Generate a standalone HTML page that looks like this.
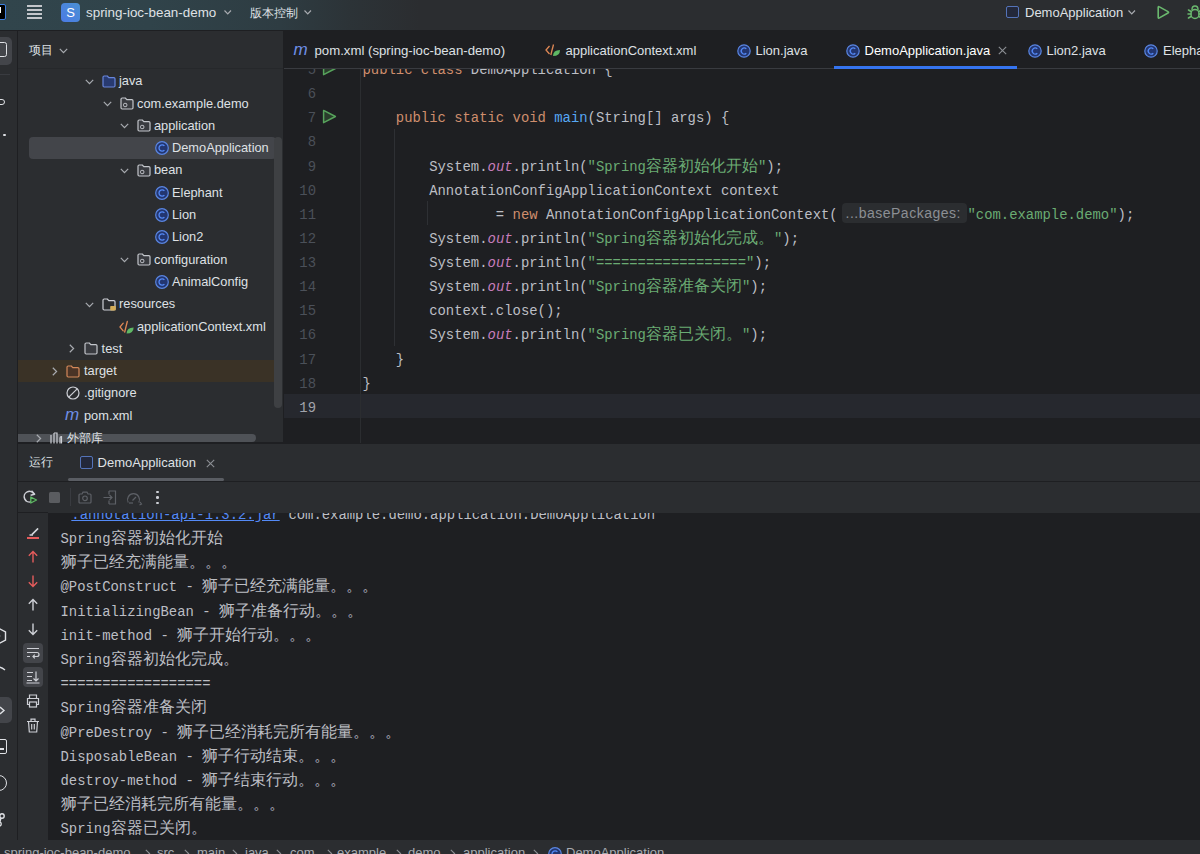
<!DOCTYPE html><html><head><meta charset="utf-8"><style>*{box-sizing:border-box;margin:0;padding:0}
html,body{width:1200px;height:854px;overflow:hidden;background:#1e1f22}
body{position:relative;font-family:"Liberation Sans",sans-serif;font-size:13px;color:#dfe1e5}
.a{position:absolute}
.t{position:absolute;white-space:pre;line-height:16px}
svg{position:absolute;overflow:visible}
#hdr{left:0;top:0;width:1200px;height:30px;background:linear-gradient(90deg,#31454c 0px,#30434a 150px,#2e3c42 280px,#2c3337 350px,#2b2d30 420px)}
.cl{position:absolute;white-space:pre;font-family:"Liberation Mono",monospace;font-size:13.9px;line-height:24px;color:#bcbec4}
.k{color:#cf8e6d}.s{color:#6aab73}.o{color:#c77dbb;font-style:italic}.m{color:#56a8f5}
.cj{font-size:16px}
.ln{position:absolute;width:40px;left:276px;text-align:right;font-family:"Liberation Mono",monospace;font-size:13.9px;line-height:24px;color:#4b5059}
.tr{position:absolute;white-space:pre;font-size:13px;line-height:16px;color:#dfe1e5}
</style></head><body>
<div id="hdr" class="a"></div>
<div class="a" style="left:0;top:30px;width:1200px;height:1px;background:#1e1f22"></div>
<div class="a" style="left:0;top:31px;width:17px;height:809px;background:#2b2d30"></div>
<div class="a" style="left:17px;top:31px;width:1px;height:809px;background:#1e1f22"></div>
<div class="a" style="left:18px;top:31px;width:265px;height:411px;background:#2b2d30"></div>
<div class="a" style="left:18px;top:68px;width:265px;height:1px;background:#26282b"></div>
<div class="a" style="left:283px;top:31px;width:1px;height:412px;background:#1e1f22"></div>
<div class="a" style="left:284px;top:31px;width:916px;height:412px;background:#1e1f22"></div>
<div class="a" style="left:18px;top:442px;width:1182px;height:2px;background:#1e1f22"></div>
<div class="a" style="left:18px;top:444px;width:1182px;height:69px;background:#2b2d30"></div>
<div class="a" style="left:18px;top:513px;width:30px;height:327px;background:#2b2d30"></div>
<div class="a" style="left:48px;top:513px;width:1152px;height:327px;background:#1e1f22"></div>
<div class="a" style="left:0;top:840px;width:1200px;height:14px;background:#2b2d30"></div>

<div class="a" style="left:18px;top:360px;width:264px;height:22px;background:#3a3226"></div>
<div class="a" style="left:29px;top:137px;width:247px;height:21.5px;border-radius:4px;background:#43454a"></div>
<svg style="left:85px;top:78.70px" width="9" height="6"><path d="M0.8 0.8 L4.5 4.6 L8.2 0.8" fill="none" stroke="#a8abb0" stroke-width="1.2"/></svg>
<svg style="left:102px;top:74.70px" width="14" height="13"><path d="M1 2.2 Q1 1 2.2 1 H5.3 L6.8 2.6 H11.8 Q13 2.6 13 3.8 V10.8 Q13 12 11.8 12 H2.2 Q1 12 1 10.8 Z" fill="#283a70" stroke="#6886dc" stroke-width="1.2" stroke-linejoin="round"/></svg>
<div class="t" style="left:119px;top:73.20px;font-size:12.8px;color:#dfe1e5">java</div>
<svg style="left:102.5px;top:101.00px" width="9" height="6"><path d="M0.8 0.8 L4.5 4.6 L8.2 0.8" fill="none" stroke="#a8abb0" stroke-width="1.2"/></svg>
<svg style="left:120px;top:97.00px" width="14" height="13"><path d="M1 2.2 Q1 1 2.2 1 H5.3 L6.8 2.6 H11.8 Q13 2.6 13 3.8 V10.8 Q13 12 11.8 12 H2.2 Q1 12 1 10.8 Z" fill="#393b40" stroke="#c3c6cb" stroke-width="1.2" stroke-linejoin="round"/><rect x="3.6" y="6.4" width="3.2" height="3.2" rx="1" fill="none" stroke="#ced0d6" stroke-width="1"/></svg>
<div class="t" style="left:137px;top:95.50px;font-size:12.8px;color:#dfe1e5">com.example.demo</div>
<svg style="left:120px;top:123.30px" width="9" height="6"><path d="M0.8 0.8 L4.5 4.6 L8.2 0.8" fill="none" stroke="#a8abb0" stroke-width="1.2"/></svg>
<svg style="left:137px;top:119.30px" width="14" height="13"><path d="M1 2.2 Q1 1 2.2 1 H5.3 L6.8 2.6 H11.8 Q13 2.6 13 3.8 V10.8 Q13 12 11.8 12 H2.2 Q1 12 1 10.8 Z" fill="#393b40" stroke="#c3c6cb" stroke-width="1.2" stroke-linejoin="round"/><rect x="3.6" y="6.4" width="3.2" height="3.2" rx="1" fill="none" stroke="#ced0d6" stroke-width="1"/></svg>
<div class="t" style="left:154px;top:117.80px;font-size:12.8px;color:#dfe1e5">application</div>
<svg style="left:155px;top:141.10px" width="14" height="14"><circle cx="7" cy="7" r="6.3" fill="#233670" stroke="#5a86e2" stroke-width="1.2"/><path d="M9.4 4.9 A3.1 3.1 0 1 0 9.4 9.1" fill="none" stroke="#548af7" stroke-width="1.3"/></svg>
<div class="t" style="left:172px;top:140.10px;font-size:12.8px;color:#dfe1e5">DemoApplication</div>
<svg style="left:120px;top:167.90px" width="9" height="6"><path d="M0.8 0.8 L4.5 4.6 L8.2 0.8" fill="none" stroke="#a8abb0" stroke-width="1.2"/></svg>
<svg style="left:137px;top:163.90px" width="14" height="13"><path d="M1 2.2 Q1 1 2.2 1 H5.3 L6.8 2.6 H11.8 Q13 2.6 13 3.8 V10.8 Q13 12 11.8 12 H2.2 Q1 12 1 10.8 Z" fill="#393b40" stroke="#c3c6cb" stroke-width="1.2" stroke-linejoin="round"/><rect x="3.6" y="6.4" width="3.2" height="3.2" rx="1" fill="none" stroke="#ced0d6" stroke-width="1"/></svg>
<div class="t" style="left:154px;top:162.40px;font-size:12.8px;color:#dfe1e5">bean</div>
<svg style="left:155px;top:185.70px" width="14" height="14"><circle cx="7" cy="7" r="6.3" fill="#233670" stroke="#5a86e2" stroke-width="1.2"/><path d="M9.4 4.9 A3.1 3.1 0 1 0 9.4 9.1" fill="none" stroke="#548af7" stroke-width="1.3"/></svg>
<div class="t" style="left:172px;top:184.70px;font-size:12.8px;color:#dfe1e5">Elephant</div>
<svg style="left:155px;top:208.00px" width="14" height="14"><circle cx="7" cy="7" r="6.3" fill="#233670" stroke="#5a86e2" stroke-width="1.2"/><path d="M9.4 4.9 A3.1 3.1 0 1 0 9.4 9.1" fill="none" stroke="#548af7" stroke-width="1.3"/></svg>
<div class="t" style="left:172px;top:207.00px;font-size:12.8px;color:#dfe1e5">Lion</div>
<svg style="left:155px;top:230.30px" width="14" height="14"><circle cx="7" cy="7" r="6.3" fill="#233670" stroke="#5a86e2" stroke-width="1.2"/><path d="M9.4 4.9 A3.1 3.1 0 1 0 9.4 9.1" fill="none" stroke="#548af7" stroke-width="1.3"/></svg>
<div class="t" style="left:172px;top:229.30px;font-size:12.8px;color:#dfe1e5">Lion2</div>
<svg style="left:120px;top:257.10px" width="9" height="6"><path d="M0.8 0.8 L4.5 4.6 L8.2 0.8" fill="none" stroke="#a8abb0" stroke-width="1.2"/></svg>
<svg style="left:137px;top:253.10px" width="14" height="13"><path d="M1 2.2 Q1 1 2.2 1 H5.3 L6.8 2.6 H11.8 Q13 2.6 13 3.8 V10.8 Q13 12 11.8 12 H2.2 Q1 12 1 10.8 Z" fill="#393b40" stroke="#c3c6cb" stroke-width="1.2" stroke-linejoin="round"/><rect x="3.6" y="6.4" width="3.2" height="3.2" rx="1" fill="none" stroke="#ced0d6" stroke-width="1"/></svg>
<div class="t" style="left:154px;top:251.60px;font-size:12.8px;color:#dfe1e5">configuration</div>
<svg style="left:155px;top:274.90px" width="14" height="14"><circle cx="7" cy="7" r="6.3" fill="#233670" stroke="#5a86e2" stroke-width="1.2"/><path d="M9.4 4.9 A3.1 3.1 0 1 0 9.4 9.1" fill="none" stroke="#548af7" stroke-width="1.3"/></svg>
<div class="t" style="left:172px;top:273.90px;font-size:12.8px;color:#dfe1e5">AnimalConfig</div>
<svg style="left:85px;top:301.70px" width="9" height="6"><path d="M0.8 0.8 L4.5 4.6 L8.2 0.8" fill="none" stroke="#a8abb0" stroke-width="1.2"/></svg>
<svg style="left:102px;top:297.70px" width="14" height="13"><path d="M1 2.2 Q1 1 2.2 1 H5.3 L6.8 2.6 H11.8 Q13 2.6 13 3.8 V10.8 Q13 12 11.8 12 H2.2 Q1 12 1 10.8 Z" fill="none" stroke="#ced0d6" stroke-width="1.2" stroke-linejoin="round"/><rect x="8.2" y="8" width="5.6" height="4.6" rx="0.8" fill="#d6ae58"/></svg>
<div class="t" style="left:119px;top:296.20px;font-size:12.8px;color:#dfe1e5">resources</div>
<svg style="left:119px;top:319.50px" width="15" height="14"><g fill="none" stroke="#e08855" stroke-width="1.3" stroke-linecap="round"><path d="M4.2 3.2 L1 7 L4.2 10.8"/><path d="M8.3 1.5 L5.7 12"/></g><path d="M7.6 13.5 Q7.6 7.4 14.6 7.4 Q14.6 13.5 7.6 13.5Z" fill="#5fb865"/></svg>
<div class="t" style="left:137px;top:318.50px;font-size:12.8px;color:#dfe1e5">applicationContext.xml</div>
<svg style="left:69px;top:344.30px" width="6" height="9"><path d="M0.8 0.8 L4.6 4.5 L0.8 8.2" fill="none" stroke="#a8abb0" stroke-width="1.2"/></svg>
<svg style="left:83.7px;top:342.30px" width="14" height="13"><path d="M1 2.2 Q1 1 2.2 1 H5.3 L6.8 2.6 H11.8 Q13 2.6 13 3.8 V10.8 Q13 12 11.8 12 H2.2 Q1 12 1 10.8 Z" fill="#393b40" stroke="#c3c6cb" stroke-width="1.2" stroke-linejoin="round"/></svg>
<div class="t" style="left:101.6px;top:340.80px;font-size:12.8px;color:#dfe1e5">test</div>
<svg style="left:52px;top:366.60px" width="6" height="9"><path d="M0.8 0.8 L4.6 4.5 L0.8 8.2" fill="none" stroke="#a8abb0" stroke-width="1.2"/></svg>
<svg style="left:66px;top:364.60px" width="14" height="13"><path d="M1 2.2 Q1 1 2.2 1 H5.3 L6.8 2.6 H11.8 Q13 2.6 13 3.8 V10.8 Q13 12 11.8 12 H2.2 Q1 12 1 10.8 Z" fill="#4a3426" stroke="#d4895a" stroke-width="1.2" stroke-linejoin="round"/></svg>
<div class="t" style="left:84px;top:363.10px;font-size:12.8px;color:#dfe1e5">target</div>
<svg style="left:66px;top:386.40px" width="14" height="14"><circle cx="7" cy="7" r="6" fill="none" stroke="#ced0d6" stroke-width="1.2"/><path d="M2.8 11.2 L11.2 2.8" stroke="#ced0d6" stroke-width="1.2"/></svg>
<div class="t" style="left:84px;top:385.40px;font-size:12.8px;color:#dfe1e5">.gitignore</div>
<div class="t" style="left:65px;top:405.70px;font-size:17px;line-height:18px;font-style:italic;color:#6f8fe6;font-family:'Liberation Sans',sans-serif">m</div>
<div class="t" style="left:84px;top:407.70px;font-size:12.8px;color:#dfe1e5">pom.xml</div>
<div class="a" style="left:274px;top:137px;width:8px;height:271px;border-radius:4px;background:#3e4043"></div>
<div class="a" style="left:18px;top:434px;width:238px;height:8px;border-radius:0 4px 4px 0;background:rgba(95,98,104,0.7)"></div>
<svg style="left:36px;top:433.50px" width="6" height="9"><path d="M0.8 0.8 L4.6 4.5 L0.8 8.2" fill="none" stroke="#a8abb0" stroke-width="1.2"/></svg>
<svg style="left:50px;top:432.00px" width="13" height="12"><g fill="none" stroke="#ced0d6" stroke-width="1.2"><path d="M1 11.5V3M4 11.5V1M4 1H7V11.5M10 11.5V6Q10 4.5 11.5 4.5V11.5"/></g></svg>
<div class="t" style="left:67px;top:430.00px;font-size:12px;color:#dfe1e5">外部库</div>
<div class="t" style="left:29px;top:42px;font-size:12px;color:#dfe1e5">项目</div>
<svg style="left:59px;top:47.50px" width="9" height="6"><path d="M0.8 0.8 L4.5 4.6 L8.2 0.8" fill="none" stroke="#a8abb0" stroke-width="1.2"/></svg>
<div class="a" style="left:284px;top:394px;width:916px;height:24px;background:#26282e"></div>
<div class="cl" style="left:362.5px;top:58.12px"><span class="k">public class</span> DemoApplication {</div>
<div class="ln" style="top:58.12px;color:#4b5059">5</div>
<div class="cl" style="left:362.5px;top:82.24px"></div>
<div class="ln" style="top:82.24px;color:#4b5059">6</div>
<div class="cl" style="left:362.5px;top:106.36px">    <span class="k">public static void</span> <span class="m">main</span>(String[] args) {</div>
<div class="ln" style="top:106.36px;color:#4b5059">7</div>
<div class="cl" style="left:362.5px;top:130.48px"></div>
<div class="ln" style="top:130.48px;color:#4b5059">8</div>
<div class="cl" style="left:362.5px;top:154.60px">        System.<span class="o">out</span>.println(<span class="s">"Spring<span class="cj">容器初始化开始</span>"</span>);</div>
<div class="ln" style="top:154.60px;color:#4b5059">9</div>
<div class="cl" style="left:362.5px;top:178.72px">        AnnotationConfigApplicationContext context</div>
<div class="ln" style="top:178.72px;color:#4b5059">10</div>
<div class="cl" style="left:362.5px;top:202.84px">                = <span class="k">new</span> AnnotationConfigApplicationContext(</div>
<div class="ln" style="top:202.84px;color:#4b5059">11</div>
<div class="cl" style="left:362.5px;top:226.96px">        System.<span class="o">out</span>.println(<span class="s">"Spring<span class="cj">容器初始化完成。</span>"</span>);</div>
<div class="ln" style="top:226.96px;color:#4b5059">12</div>
<div class="cl" style="left:362.5px;top:251.08px">        System.<span class="o">out</span>.println(<span class="s">"=================="</span>);</div>
<div class="ln" style="top:251.08px;color:#4b5059">13</div>
<div class="cl" style="left:362.5px;top:275.20px">        System.<span class="o">out</span>.println(<span class="s">"Spring<span class="cj">容器准备关闭</span>"</span>);</div>
<div class="ln" style="top:275.20px;color:#4b5059">14</div>
<div class="cl" style="left:362.5px;top:299.32px">        context.close();</div>
<div class="ln" style="top:299.32px;color:#4b5059">15</div>
<div class="cl" style="left:362.5px;top:323.44px">        System.<span class="o">out</span>.println(<span class="s">"Spring<span class="cj">容器已关闭。</span>"</span>);</div>
<div class="ln" style="top:323.44px;color:#4b5059">16</div>
<div class="cl" style="left:362.5px;top:347.56px">    }</div>
<div class="ln" style="top:347.56px;color:#4b5059">17</div>
<div class="cl" style="left:362.5px;top:371.68px">}</div>
<div class="ln" style="top:371.68px;color:#4b5059">18</div>
<div class="cl" style="left:362.5px;top:395.80px"></div>
<div class="ln" style="top:395.80px;color:#a1a3ab">19</div>
<div class="a" style="left:360px;top:69px;width:1px;height:374px;background:#2b2d30"></div>
<div class="a" style="left:394px;top:128.68px;width:1px;height:217.08px;background:#2e3034"></div>
<div class="a" style="left:427px;top:201.04px;width:1px;height:24px;background:#2e3034"></div>
<svg style="left:322px;top:60.82px" width="15" height="15"><path d="M1.6 1.4 L13.4 7.5 L1.6 13.6 Z" fill="#2a3d2c" stroke="#57a35c" stroke-width="1.5" stroke-linejoin="round"/></svg>
<svg style="left:322px;top:109.06px" width="15" height="15"><path d="M1.6 1.4 L13.4 7.5 L1.6 13.6 Z" fill="#2a3d2c" stroke="#57a35c" stroke-width="1.5" stroke-linejoin="round"/></svg>
<div class="a" style="left:841.5px;top:202.5px;width:125px;height:20.5px;border-radius:4px;background:#2b2d30"></div>
<div class="t" style="left:845.5px;top:203.5px;font-size:14px;line-height:18px;letter-spacing:0.5px;color:#8c8f94">...basePackages:</div>
<div class="cl" style="left:967.5px;top:202.84px"><span class="s">"com.example.demo"</span>);</div>
<div class="a" style="left:284px;top:31px;width:916px;height:37px;background:#1e1f22"></div>
<div class="a" style="left:284px;top:68px;width:916px;height:1px;background:#393b40"></div>

<!-- jetbrains logo (cut) -->
<div class="a" style="left:-8px;top:4px;width:14px;height:16px;background:#000;border:1.5px solid #3d7fe0;border-radius:2px"></div>
<div class="a" style="left:0px;top:6.5px;width:1.3px;height:6px;background:#fff"></div>
<!-- hamburger -->
<div class="a" style="left:27px;top:5px;width:15px;height:2px;background:#c3c6cb"></div>
<div class="a" style="left:27px;top:9px;width:15px;height:2px;background:#c3c6cb"></div>
<div class="a" style="left:27px;top:13px;width:15px;height:2px;background:#c3c6cb"></div>
<div class="a" style="left:27px;top:17.4px;width:15px;height:2px;background:#c3c6cb"></div>
<!-- project icon -->
<div class="a" style="left:61px;top:3px;width:19px;height:19px;border-radius:4px;background:linear-gradient(45deg,#4b7be6,#4a90d2)"></div>
<div class="t" style="left:61px;top:4px;width:19px;text-align:center;font-size:13px;line-height:18px;color:#fff">S</div>
<div class="t" style="left:86px;top:5px;font-size:13.4px;color:#dfe1e5">spring-ioc-bean-demo</div>
<svg style="left:224px;top:10px" width="8" height="5"><path d="M0.5 0.5 L3.75 3.8 L7 0.5" fill="none" stroke="#a8abb0" stroke-width="1.2"/></svg>
<div class="t" style="left:250px;top:5px;font-size:12px;color:#dfe1e5">版本控制</div>
<svg style="left:304px;top:10px" width="8" height="5"><path d="M0.5 0.5 L3.75 3.8 L7 0.5" fill="none" stroke="#a8abb0" stroke-width="1.2"/></svg>
<!-- run config -->
<div class="a" style="left:1006px;top:6px;width:13px;height:12px;border:1.2px solid #5473b8;border-radius:2px;background:#23283a"></div>
<div class="t" style="left:1025px;top:5px;font-size:13px;color:#dfe1e5">DemoApplication</div>
<svg style="left:1128px;top:10px" width="8" height="5"><path d="M0.5 0.5 L3.75 3.8 L7 0.5" fill="none" stroke="#a8abb0" stroke-width="1.2"/></svg>
<svg style="left:1156px;top:5px" width="14" height="15"><path d="M2.2 2.6 Q2.2 1.2 3.4 1.9 L12 6.6 Q13.2 7.3 12 8 L3.4 12.9 Q2.2 13.6 2.2 12.2 Z" fill="none" stroke="#6ab86e" stroke-width="1.6" stroke-linejoin="round"/></svg>
<svg style="left:1186px;top:4px" width="18" height="16"><g fill="none" stroke="#6ab86e" stroke-width="1.5" stroke-linecap="round"><path d="M6 5.5 Q6 2 9 2 Q12 2 12 5.5"/><rect x="5" y="5.5" width="8" height="9" rx="4"/><path d="M2.5 6 L5 7.5 M2 10 H5 M2.5 14 L5 12.5 M15.5 6 L13 7.5 M16 10 H13 M15.5 14 L13 12.5"/></g></svg>
<!-- tabs -->
<div class="t" style="left:293.5px;top:41px;font-size:17px;line-height:18px;font-style:italic;color:#6f8fe6">m</div>
<div class="t" style="left:314.5px;top:43px;font-size:13.2px;color:#dfe1e5">pom.xml (spring-ioc-bean-demo)</div>
<svg style="left:545px;top:43px" width="16" height="14"><g fill="none" stroke="#e08855" stroke-width="1.3"><path d="M4.5 3 L1 7 L4.5 11"/><path d="M8.5 1.5 L5.8 12"/></g><path d="M8 13 Q8 7 15 7 Q15 13 8 13Z" fill="#5fb865"/></svg>
<div class="t" style="left:565.5px;top:43px;font-size:13px;color:#dfe1e5">applicationContext.xml</div>
<svg style="left:737px;top:43.5px" width="14" height="14" class="ci"><circle cx="7" cy="7" r="6.2" fill="#233670" stroke="#5a86e2" stroke-width="1.2"/><path d="M9.3 4.8 A3 3 0 1 0 9.3 9.2" fill="none" stroke="#548af7" stroke-width="1.3"/></svg>
<div class="t" style="left:755.5px;top:43px;font-size:13px;color:#dfe1e5">Lion.java</div>
<svg style="left:845.5px;top:43.5px" width="14" height="14"><circle cx="7" cy="7" r="6.2" fill="#233670" stroke="#5a86e2" stroke-width="1.2"/><path d="M9.3 4.8 A3 3 0 1 0 9.3 9.2" fill="none" stroke="#548af7" stroke-width="1.3"/></svg>
<div class="t" style="left:864.5px;top:43px;font-size:13px;color:#ffffff">DemoApplication.java</div>
<svg style="left:998px;top:46px" width="9" height="9"><path d="M0.8 0.8L8.2 8.2M8.2 0.8L0.8 8.2" stroke="#8c8f94" stroke-width="1.1"/></svg>
<div class="a" style="left:834px;top:66px;width:183px;height:3px;background:#3574f0"></div>
<svg style="left:1027.5px;top:43.5px" width="14" height="14"><circle cx="7" cy="7" r="6.2" fill="#233670" stroke="#5a86e2" stroke-width="1.2"/><path d="M9.3 4.8 A3 3 0 1 0 9.3 9.2" fill="none" stroke="#548af7" stroke-width="1.3"/></svg>
<div class="t" style="left:1046.5px;top:43px;font-size:13px;color:#dfe1e5">Lion2.java</div>
<svg style="left:1144px;top:43.5px" width="14" height="14"><circle cx="7" cy="7" r="6.2" fill="#233670" stroke="#5a86e2" stroke-width="1.2"/><path d="M9.3 4.8 A3 3 0 1 0 9.3 9.2" fill="none" stroke="#548af7" stroke-width="1.3"/></svg>
<div class="t" style="left:1163px;top:43px;font-size:13px;color:#dfe1e5">Elephant.java</div>

<div class="cl" style="left:71.3px;top:502.80px;color:#548af7;text-decoration:underline">.annotation-api-1.3.2.jar</div>
<div class="cl" style="left:288.40px;top:502.80px">com.example.demo.application.DemoApplication</div>
<div class="cl" style="left:60.5px;top:527.00px">Spring<span class="cj">容器初始化开始</span></div>
<div class="cl" style="left:60.5px;top:551.20px"><span class="cj">狮子已经充满能量。。。</span></div>
<div class="cl" style="left:60.5px;top:575.40px">@PostConstruct - <span class="cj">狮子已经充满能量。。。</span></div>
<div class="cl" style="left:60.5px;top:599.60px">InitializingBean - <span class="cj">狮子准备行动。。。</span></div>
<div class="cl" style="left:60.5px;top:623.80px">init-method - <span class="cj">狮子开始行动。。。</span></div>
<div class="cl" style="left:60.5px;top:648.00px">Spring<span class="cj">容器初始化完成。</span></div>
<div class="cl" style="left:60.5px;top:672.20px">==================</div>
<div class="cl" style="left:60.5px;top:696.40px">Spring<span class="cj">容器准备关闭</span></div>
<div class="cl" style="left:60.5px;top:720.60px">@PreDestroy - <span class="cj">狮子已经消耗完所有能量。。。</span></div>
<div class="cl" style="left:60.5px;top:744.80px">DisposableBean - <span class="cj">狮子行动结束。。。</span></div>
<div class="cl" style="left:60.5px;top:769.00px">destroy-method - <span class="cj">狮子结束行动。。。</span></div>
<div class="cl" style="left:60.5px;top:793.20px"><span class="cj">狮子已经消耗完所有能量。。。</span></div>
<div class="cl" style="left:60.5px;top:817.40px">Spring<span class="cj">容器已关闭。</span></div>
<div class="a" style="left:48px;top:482px;width:1152px;height:31px;background:#2b2d30"></div>
<div class="t" style="left:29px;top:454.00px;font-size:12px;color:#dfe1e5">运行</div>
<div class="a" style="left:80px;top:456px;width:13px;height:13px;border:1.2px solid #5473b8;border-radius:2px;background:#23283a"></div>
<div class="t" style="left:97.6px;top:455.00px;font-size:13px;color:#dfe1e5">DemoApplication</div>
<svg style="left:206px;top:459px" width="9" height="9"><path d="M0.8 0.8L8.2 8.2M8.2 0.8L0.8 8.2" stroke="#8c8f94" stroke-width="1.1"/></svg>
<div class="a" style="left:68px;top:478px;width:156px;height:3px;border-radius:1.5px;background:#5a5d63"></div>
<svg style="left:22px;top:489px" width="16" height="16"><path d="M12.2 5.2 A5.3 5.3 0 1 0 9.5 12.6" fill="none" stroke="#ced0d6" stroke-width="1.5"/><path d="M9.5 1.8 L12.6 5.3 L8.6 6.2" fill="none" stroke="#ced0d6" stroke-width="1.5" stroke-linejoin="round"/><path d="M8.8 8 L14.5 11 L8.8 14 Z" fill="#253a28" stroke="#5fb865" stroke-width="1.3" stroke-linejoin="round"/></svg>
<div class="a" style="left:48.5px;top:491.5px;width:11px;height:11px;border-radius:1.5px;background:#5a5c60"></div>
<div class="a" style="left:69.5px;top:488px;width:1px;height:18px;background:#393b40"></div>
<svg style="left:77.5px;top:491px" width="14" height="13"><g fill="none" stroke="#5d6066" stroke-width="1.2"><path d="M1 4 Q1 3 2 3 H4 L5 1.2 H9 L10 3 H12 Q13 3 13 4 V11 Q13 12 12 12 H2 Q1 12 1 11Z"/><circle cx="7" cy="7.3" r="2.3"/></g></svg>
<svg style="left:103px;top:490px" width="14" height="15"><g fill="none" stroke="#5d6066" stroke-width="1.2"><path d="M6 1 H12.5 V14 H6 M6 1 V4.5 M6 10.5 V14"/><path d="M0.5 7.5 H9 M6.5 5 L9 7.5 L6.5 10"/></g></svg>
<svg style="left:125.5px;top:491px" width="17" height="15"><g fill="none" stroke="#5d6066" stroke-width="1.2"><path d="M2.2 11.5 A6 6 0 1 1 12.8 11.5"/><path d="M6.5 9.5 L10 6"/><path d="M3 12 H7"/><path d="M14 11 L15.5 13 L13.5 14"/></g></svg>
<div class="a" style="left:156px;top:490.8px;width:2.6px;height:2.6px;border-radius:50%;background:#ced0d6"></div>
<div class="a" style="left:156px;top:496.3px;width:2.6px;height:2.6px;border-radius:50%;background:#ced0d6"></div>
<div class="a" style="left:156px;top:501.8px;width:2.6px;height:2.6px;border-radius:50%;background:#ced0d6"></div>
<svg style="left:25.5px;top:526px" width="14" height="14"><path d="M6 8.5 L12 2.5" stroke="#ced0d6" stroke-width="1.5"/><path d="M6 8.5 L12 2.5 M3.5 9 L7 9" stroke="#ced0d6" stroke-width="1.5"/><rect x="1" y="11" width="12" height="2" fill="#e55c5c"/></svg>
<svg style="left:25.5px;top:550px" width="14" height="14"><path d="M7 1.5 V12.5 M2.8 5.7 L7 1.5 L11.2 5.7" fill="none" stroke="#e55c5c" stroke-width="1.4"/></svg>
<svg style="left:25.5px;top:574px" width="14" height="14"><path d="M7 1.5 V12.5 M2.8 8.3 L7 12.5 L11.2 8.3" fill="none" stroke="#e55c5c" stroke-width="1.4"/></svg>
<svg style="left:25.5px;top:598px" width="14" height="14"><path d="M7 1.5 V12.5 M2.8 5.7 L7 1.5 L11.2 5.7" fill="none" stroke="#ced0d6" stroke-width="1.4"/></svg>
<svg style="left:25.5px;top:622px" width="14" height="14"><path d="M7 1.5 V12.5 M2.8 8.3 L7 12.5 L11.2 8.3" fill="none" stroke="#ced0d6" stroke-width="1.4"/></svg>
<div class="a" style="left:23px;top:643px;width:20px;height:20px;border-radius:4px;background:#43454a"></div>
<svg style="left:26px;top:646px" width="14" height="14"><g fill="none" stroke="#ced0d6" stroke-width="1.2"><path d="M1 2.5 H13 M1 6.5 H11 Q13 6.5 13 8.5 Q13 10.5 11 10.5 H7 M8.8 8.7 L7 10.5 L8.8 12.3 M1 10.5 H4"/></g></svg>
<div class="a" style="left:23px;top:667px;width:20px;height:20px;border-radius:4px;background:#43454a"></div>
<svg style="left:26px;top:670px" width="14" height="14"><g fill="none" stroke="#ced0d6" stroke-width="1.2"><path d="M1 2.5 H7 M1 6.5 H6 M1 10.5 H6 M0.5 13 H13.5 M10 1.5 V11 M7.5 8.5 L10 11 L12.5 8.5"/></g></svg>
<svg style="left:25.5px;top:694px" width="14" height="14"><g fill="none" stroke="#ced0d6" stroke-width="1.2"><path d="M3.5 4.5 V1 H10.5 V4.5 M3.5 10.5 H1.5 V4.5 H12.5 V10.5 H10.5"/><rect x="3.5" y="8" width="7" height="5"/></g></svg>
<svg style="left:25.5px;top:718px" width="14" height="15"><g fill="none" stroke="#ced0d6" stroke-width="1.2"><path d="M1 3.5 H13 M5 3.5 V1.2 H9 V3.5 M2.5 3.5 L3.3 14 H10.7 L11.5 3.5 M5.7 6 V11.5 M8.3 6 V11.5"/></g></svg>
<div class="a" style="left:18px;top:481px;width:1182px;height:1px;background:#1e1f22"></div>
<div class="a" style="left:18px;top:512px;width:30px;height:1px;background:#1e1f22"></div>
<div class="t" style="left:4px;top:844.5px;font-size:13px;color:#a8abb0">spring-ioc-bean-demo</div>
<div class="t" style="left:157px;top:844.5px;font-size:13px;color:#a8abb0">src</div>
<div class="t" style="left:197px;top:844.5px;font-size:13px;color:#a8abb0">main</div>
<div class="t" style="left:245px;top:844.5px;font-size:13px;color:#a8abb0">java</div>
<div class="t" style="left:290px;top:844.5px;font-size:13px;color:#a8abb0">com</div>
<div class="t" style="left:337px;top:844.5px;font-size:13px;color:#a8abb0">example</div>
<div class="t" style="left:408px;top:844.5px;font-size:13px;color:#a8abb0">demo</div>
<div class="t" style="left:463px;top:844.5px;font-size:13px;color:#a8abb0">application</div>
<svg style="left:548px;top:846.5px" width="14" height="14"><circle cx="7" cy="7" r="6.3" fill="#233670" stroke="#5a86e2" stroke-width="1.2"/><path d="M9.4 4.9 A3.1 3.1 0 1 0 9.4 9.1" fill="none" stroke="#548af7" stroke-width="1.3"/></svg>
<div class="t" style="left:566px;top:844.5px;font-size:13px;color:#a8abb0">DemoApplication</div>
<svg style="left:145px;top:848.5px" width="6" height="9"><path d="M0.8 0.8 L4.6 4.5 L0.8 8.2" fill="none" stroke="#8c8f94" stroke-width="1.1"/></svg>
<svg style="left:184px;top:848.5px" width="6" height="9"><path d="M0.8 0.8 L4.6 4.5 L0.8 8.2" fill="none" stroke="#8c8f94" stroke-width="1.1"/></svg>
<svg style="left:232px;top:848.5px" width="6" height="9"><path d="M0.8 0.8 L4.6 4.5 L0.8 8.2" fill="none" stroke="#8c8f94" stroke-width="1.1"/></svg>
<svg style="left:276px;top:848.5px" width="6" height="9"><path d="M0.8 0.8 L4.6 4.5 L0.8 8.2" fill="none" stroke="#8c8f94" stroke-width="1.1"/></svg>
<svg style="left:327px;top:848.5px" width="6" height="9"><path d="M0.8 0.8 L4.6 4.5 L0.8 8.2" fill="none" stroke="#8c8f94" stroke-width="1.1"/></svg>
<svg style="left:396px;top:848.5px" width="6" height="9"><path d="M0.8 0.8 L4.6 4.5 L0.8 8.2" fill="none" stroke="#8c8f94" stroke-width="1.1"/></svg>
<svg style="left:450px;top:848.5px" width="6" height="9"><path d="M0.8 0.8 L4.6 4.5 L0.8 8.2" fill="none" stroke="#8c8f94" stroke-width="1.1"/></svg>
<svg style="left:533px;top:848.5px" width="6" height="9"><path d="M0.8 0.8 L4.6 4.5 L0.8 8.2" fill="none" stroke="#8c8f94" stroke-width="1.1"/></svg>
<!-- left strip icons -->
<div class="a" style="left:-16px;top:36.5px;width:28px;height:28px;border-radius:5px;background:#43454a"></div>
<div class="a" style="left:-8px;top:42px;width:15px;height:15px;border:1.6px solid #dfe1e5;border-radius:2.5px"></div>
<div class="a" style="left:0;top:73.5px;width:10px;height:1px;background:#393b40"></div>
<div class="a" style="left:-8px;top:99px;width:13px;height:6px;border:1.5px solid #dfe1e5;border-radius:3px"></div>
<div class="a" style="left:3px;top:133.5px;width:2.5px;height:2.5px;border-radius:50%;background:#dfe1e5"></div>
<svg style="left:-10px;top:627px" width="18" height="18"><path d="M9 1.5 L15.5 5 V13 L9 16.5 L2.5 13 V5 Z" fill="none" stroke="#dfe1e5" stroke-width="1.4"/><path d="M6.5 6.5 L9.5 9 L6.5 11.5" fill="none" stroke="#dfe1e5" stroke-width="1.4"/></svg>
<svg style="left:-10px;top:663px" width="18" height="18"><path d="M1 7 Q8 1 15 7 M4 6 V16 M0 16 H5" fill="none" stroke="#dfe1e5" stroke-width="1.4"/></svg>
<div class="a" style="left:-16px;top:697px;width:28px;height:26px;border-radius:5px;background:#43454a"></div>
<svg style="left:-10px;top:701px" width="18" height="18"><path d="M10 6 L14 9.5 L10 13" fill="none" stroke="#dfe1e5" stroke-width="1.4"/></svg>
<div class="a" style="left:-8px;top:739px;width:15px;height:15px;border:1.5px solid #dfe1e5;border-radius:2px"></div>
<div class="a" style="left:0px;top:748px;width:4px;height:1.5px;background:#dfe1e5"></div>
<div class="a" style="left:-9px;top:775px;width:16px;height:16px;border:1.5px solid #dfe1e5;border-radius:50%"></div>
<svg style="left:-10px;top:811px" width="18" height="18"><g fill="none" stroke="#dfe1e5" stroke-width="1.4"><circle cx="12" cy="5" r="2.2"/><circle cx="9" cy="13" r="2.2"/><path d="M11 7 L9.8 10.8"/></g></svg>

</body></html>
